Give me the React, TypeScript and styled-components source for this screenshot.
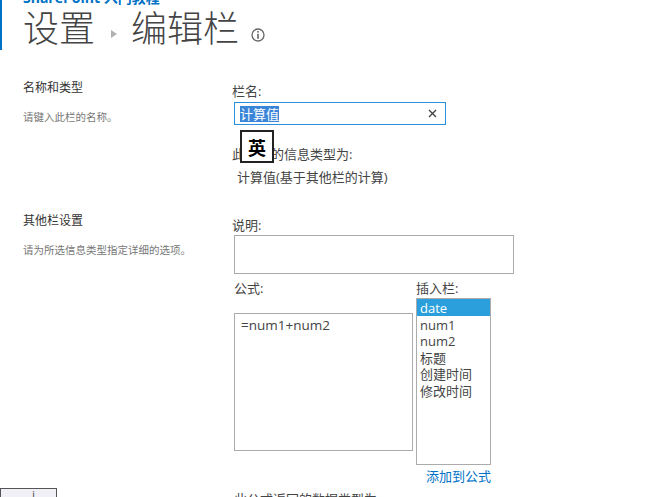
import styled, { createGlobalStyle } from "styled-components";

const FONT = `"Open Sans", "Noto Sans CJK SC", sans-serif`;

const GlobalStyle = createGlobalStyle`
  html, body {
    margin: 0;
    height: 497px;
    overflow: hidden;
    background: #fff;
    font-family: ${FONT};
  }
`;

const Page = styled.div`
  position: relative;
  width: 645px;
  height: 497px;
  overflow: hidden;
`;

const Header = styled.header`
  display: flow-root;
  height: 50px;
  border-left: 2px solid #0072c6;
  padding-left: 21px;
`;

const SiteLink = styled.div`
  height: 10px;
  margin-top: -8px;
  font-size: 14px;
  font-weight: 700;
  line-height: 12px;
  color: #0072c6;
`;

const TitleRow = styled.div`
  display: flex;
  align-items: center;
  height: 42px;
  margin-top: 6px;
  color: #444;
`;

const TitleText = styled.span`
  font-size: 36px;
  line-height: 42px;
  font-weight: 300;
`;

const Chevron = styled.span`
  width: 0;
  height: 0;
  margin: 10px 14px 0 16px;
  border-left: 6px solid #b1b1b1;
  border-top: 4px solid transparent;
  border-bottom: 4px solid transparent;
`;

const InfoIcon = styled.svg`
  width: 14px;
  height: 14px;
  margin: 12px 0 0 12px;
`;

const Section = styled.section<{ $height: number }>`
  display: grid;
  grid-template-columns: 209px 1fr;
  height: ${({ $height }) => $height}px;
  padding-left: 23px;
`;

const Side = styled.div`
  padding-top: 30px;
`;

const SideTitle = styled.div`
  font-size: 12px;
  line-height: 16px;
  color: #333;
`;

const SideText = styled.div`
  margin-top: 13px;
  font-size: 10.5px;
  line-height: 16px;
  color: #777;
`;

const Label = styled.div`
  font-size: 13px;
  line-height: 17px;
  color: #444;
`;

const Main = styled.div`
  padding-top: 33px;
`;

const NameBox = styled.div`
  display: flex;
  align-items: center;
  justify-content: space-between;
  box-sizing: border-box;
  width: 212px;
  height: 23px;
  margin: 2px 0 0 2px;
  padding: 0 8px 0 5px;
  border: 1px solid #2b90dc;
`;

const Selected = styled.span`
  font-size: 13px;
  line-height: 16px;
  color: #fff;
  background: #3a85d8;
`;

const ClearIcon = styled.svg`
  width: 9px;
  height: 9px;
`;

const TypeHint = styled(Label)`
  margin-top: 21px;
`;

const TypeValue = styled(Label)`
  margin: 6px 0 0 5px;
`;

const DescLabel = styled(Label)`
  padding-top: 1px;
`;

const DescBox = styled.div`
  box-sizing: border-box;
  width: 280px;
  height: 39px;
  margin: 1px 0 0 2px;
  border: 1px solid #ababab;
`;

const FormulaGrid = styled.div`
  display: grid;
  grid-template-columns: 182px 76px;
  margin: 6px 0 0 2px;
`;

const FormulaBox = styled.div`
  box-sizing: border-box;
  width: 179px;
  height: 138px;
  margin-top: 16px;
  padding: 3px 6px;
  border: 1px solid #ababab;
  font-size: 13.5px;
  line-height: 17px;
  color: #444;
`;

const ColumnList = styled.ul`
  box-sizing: border-box;
  width: 75px;
  height: 167px;
  margin: 1px 0 0;
  padding: 0;
  list-style: none;
  border: 1px solid #ababab;
`;

const ColumnItem = styled.li<{ $active?: boolean }>`
  height: 16.5px;
  padding-left: 3px;
  font-size: 13px;
  line-height: 18px;
  color: ${({ $active }) => ($active ? "#fff" : "#444")};
  background: ${({ $active }) => ($active ? "#2a9fdc" : "transparent")};
`;

const AddLink = styled.a`
  display: block;
  width: 259px;
  margin: 3px 0 0;
  text-align: right;
  font-size: 13px;
  line-height: 17px;
  color: #0072c6;
`;

const ReturnLabel = styled(Label)`
  margin: 6px 0 0 2px;
`;

const ImeBadge = styled.div`
  position: absolute;
  left: 240px;
  top: 130px;
  display: flex;
  align-items: center;
  justify-content: center;
  box-sizing: border-box;
  width: 34px;
  height: 33px;
  border: 2px solid #222;
  background: #fff;
  font-size: 18px;
  font-weight: 700;
  color: #000;
`;

const CornerTab = styled.div`
  position: absolute;
  left: 0;
  top: 488px;
  box-sizing: border-box;
  width: 57px;
  height: 20px;
  border: 1px solid #555;
  background: #f0f0f6;
  padding-left: 31px;
  font-size: 12px;
  line-height: 14px;
  color: #555;
`;

const COLUMNS = ["date", "num1", "num2", "标题", "创建时间", "修改时间"];

export default function App() {
  return (
    <Page>
      <GlobalStyle />
      <Header>
        <SiteLink>SharePoint 入门教程</SiteLink>
        <TitleRow>
          <TitleText>设置</TitleText>
          <Chevron />
          <TitleText>编辑栏</TitleText>
          <InfoIcon viewBox="0 0 14 14">
            <circle cx="7" cy="7" r="6" fill="none" stroke="#666" strokeWidth="1.3" />
            <rect x="6.2" y="3" width="1.6" height="1.6" fill="#666" />
            <rect x="6.2" y="5.8" width="1.6" height="5" fill="#666" />
          </InfoIcon>
        </TitleRow>
      </Header>

      <Section $height={133}>
        <Side>
          <SideTitle>名称和类型</SideTitle>
          <SideText>请键入此栏的名称。</SideText>
        </Side>
        <Main>
          <Label>栏名:</Label>
          <NameBox>
            <Selected>计算值</Selected>
            <ClearIcon viewBox="0 0 9 9">
              <path d="M1 1l7 7M8 1L1 8" stroke="#444" strokeWidth="1.4" />
            </ClearIcon>
          </NameBox>
          <TypeHint>此栏中的信息类型为:</TypeHint>
          <TypeValue>计算值(基于其他栏的计算)</TypeValue>
        </Main>
      </Section>

      <Section $height={314}>
        <Side>
          <SideTitle>其他栏设置</SideTitle>
          <SideText>请为所选信息类型指定详细的选项。</SideText>
        </Side>
        <Main>
          <DescLabel>说明:</DescLabel>
          <DescBox />
          <FormulaGrid>
            <div>
              <Label>公式:</Label>
              <FormulaBox>=num1+num2</FormulaBox>
            </div>
            <div>
              <Label>插入栏:</Label>
              <ColumnList>
                {COLUMNS.map((name, i) => (
                  <ColumnItem key={name} $active={i === 0}>
                    {name}
                  </ColumnItem>
                ))}
              </ColumnList>
            </div>
          </FormulaGrid>
          <AddLink>添加到公式</AddLink>
          <ReturnLabel>此公式返回的数据类型为:</ReturnLabel>
        </Main>
      </Section>

      <ImeBadge>英</ImeBadge>
      <CornerTab>i</CornerTab>
    </Page>
  );
}
